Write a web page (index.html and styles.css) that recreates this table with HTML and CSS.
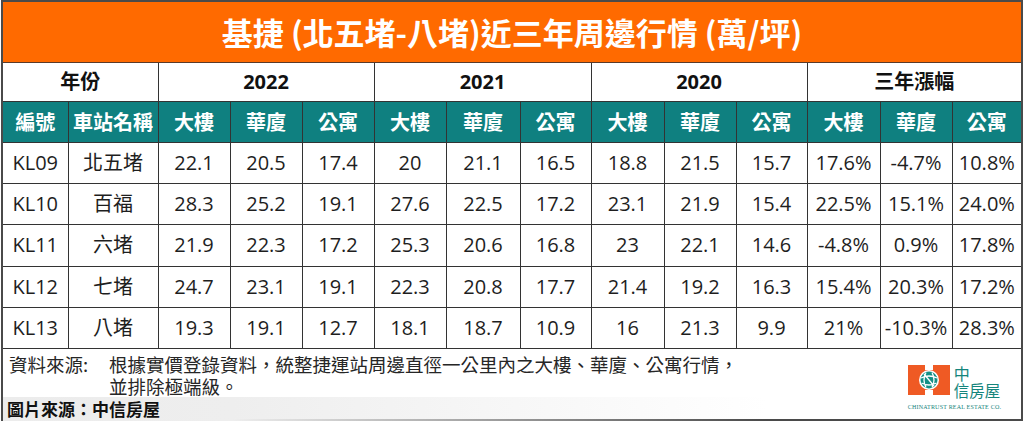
FILE: index.html
```html
<!DOCTYPE html>
<html lang="zh-Hant">
<head>
<meta charset="utf-8">
<link rel="stylesheet" href="styles.css">
</head>
<body>
<div class="sheet">
<table class="grid">
<colgroup>
<col style="width:66px"><col style="width:90px"><col style="width:72px"><col style="width:72px"><col style="width:72px"><col style="width:72px"><col style="width:74px"><col style="width:71px"><col style="width:73px"><col style="width:72px"><col style="width:71px"><col style="width:73px"><col style="width:72px"><col style="width:70px">
</colgroup>
<tr class="title-row"><td colspan="14" class="title">基捷 (北五堵-八堵)近三年周邊行情 (萬/坪)</td></tr>
<tr class="year-row">
<td colspan="2">年份</td><td colspan="3">2022</td><td colspan="3">2021</td><td colspan="3">2020</td><td colspan="3">三年漲幅</td>
</tr>
<tr class="head-row">
<td>編號</td><td>車站名稱</td><td>大樓</td><td>華廈</td><td>公寓</td><td>大樓</td><td>華廈</td><td>公寓</td><td>大樓</td><td>華廈</td><td>公寓</td><td>大樓</td><td>華廈</td><td>公寓</td>
</tr>
<tr class="data-row"><td>KL09</td><td>北五堵</td><td>22.1</td><td>20.5</td><td>17.4</td><td>20</td><td>21.1</td><td>16.5</td><td>18.8</td><td>21.5</td><td>15.7</td><td>17.6%</td><td>-4.7%</td><td>10.8%</td></tr>
<tr class="data-row"><td>KL10</td><td>百福</td><td>28.3</td><td>25.2</td><td>19.1</td><td>27.6</td><td>22.5</td><td>17.2</td><td>23.1</td><td>21.9</td><td>15.4</td><td>22.5%</td><td>15.1%</td><td>24.0%</td></tr>
<tr class="data-row"><td>KL11</td><td>六堵</td><td>21.9</td><td>22.3</td><td>17.2</td><td>25.3</td><td>20.6</td><td>16.8</td><td>23</td><td>22.1</td><td>14.6</td><td>-4.8%</td><td>0.9%</td><td>17.8%</td></tr>
<tr class="data-row"><td>KL12</td><td>七堵</td><td>24.7</td><td>23.1</td><td>19.1</td><td>22.3</td><td>20.8</td><td>17.7</td><td>21.4</td><td>19.2</td><td>16.3</td><td>15.4%</td><td>20.3%</td><td>17.2%</td></tr>
<tr class="data-row"><td>KL13</td><td>八堵</td><td>19.3</td><td>19.1</td><td>12.7</td><td>18.1</td><td>18.7</td><td>10.9</td><td>16</td><td>21.3</td><td>9.9</td><td>21%</td><td>-10.3%</td><td>28.3%</td></tr>
<tr class="foot-row">
<td colspan="14" class="foot">
<div class="foot-inner">
<div class="notes">
<div class="note"><span class="note-label">資料來源:</span><span class="note-body"><span class="line">根據實價登錄資料，統整捷運站周邊直徑一公里內之大樓、華廈、公寓行情，</span><span class="line">並排除極端級。</span></span></div>
<div class="caption">圖片來源：中信房屋</div>
</div>
<div class="logo">
<div class="logo-top">
<svg class="logo-mark" viewBox="0 0 42 30" width="42" height="30">
<rect x="0" y="0" width="42" height="30" fill="#ef5a24"/>
<rect x="17" y="0" width="8" height="5" fill="#fff"/>
<rect x="17" y="25" width="8" height="5" fill="#fff"/>
<circle cx="21" cy="15" r="10" fill="#fff"/>
<circle cx="21" cy="15" r="8.5" fill="#138f84"/>
<path d="M13 13 Q21 9 29 13 M13.5 18 Q21 22 28.5 18 M18 7.5 Q14 15 18 22.5 M24 7.5 Q28 15 24 22.5 M16 9 L26 21" stroke="#fff" stroke-width="1.3" fill="none"/>
</svg>
<div class="logo-name"><span class="zhong">中</span><span class="xin">信房屋</span></div>
</div>
<div class="logo-en">CHINATRUST REAL ESTATE CO.</div>
</div>
</div>
</td>
</tr>
</table>
</div>
</body>
</html>
```
FILE: styles.css
```css
html, body {
  margin: 0;
  padding: 0;
  background: #ffffff;
}
body {
  width: 1024px;
  height: 424px;
  overflow: hidden;
  font-family: "Open Sans", "Noto Sans CJK TC", sans-serif;
  color: #1e1e1e;
}
.sheet {
  padding: 0 1px 0 1px;
}
.grid {
  border-collapse: collapse;
  table-layout: fixed;
  width: 1021px;
  border: 2px solid #4a4a4a;
}
.grid td {
  border: 1px solid #333;
  text-align: center;
  padding: 0;
  font-size: 20px;
  line-height: 24px;
  white-space: nowrap;
  overflow: visible;
}
.title-row td {
  height: 60px;
  background: #ff6a00;
  color: #ffffff;
  font-weight: 700;
  font-size: 31px;
  font-family: "Noto Sans CJK TC", sans-serif;
  border-bottom: 1px solid #5a3a2a;
}
.year-row td {
  height: 38px;
  font-weight: 700;
  font-size: 20px;
  font-family: "Open Sans", "Noto Sans CJK TC", sans-serif;
  color: #111;
  background: #fff;
}
.head-row td {
  height: 40px;
  background: #0f8080;
  color: #ffffff;
  font-weight: 700;
  font-family: "Noto Sans CJK TC", sans-serif;
  font-size: 20px;
}
.data-row td {
  height: 40.2px;
  font-size: 20px;
  color: #1e1e1e;
}
.foot-row td.foot {
  height: 70px;
  text-align: left;
  vertical-align: top;
  padding: 0;
}
.foot-inner {
  display: flex;
  justify-content: space-between;
  height: 70px;
}
.notes {
  display: flex;
  flex-direction: column;
  justify-content: space-between;
  padding-top: 4px;
}
.note {
  display: flex;
  font-family: "Noto Sans CJK TC", sans-serif;
  font-size: 18.5px;
  color: #262626;
  padding-left: 6px;
}
.note-label {
  width: 100px;
  flex: none;
  line-height: 22px;
}
.note-body {
  display: flex;
  flex-direction: column;
  white-space: nowrap;
}
.note-body .line {
  display: block;
  line-height: 22px;
}
.caption {
  font-family: "Noto Sans CJK TC", sans-serif;
  font-weight: 700;
  font-size: 17px;
  line-height: 24px;
  color: #111;
  padding-left: 4px;
  width: 760px;
  background: linear-gradient(90deg, #ececec 0%, #eeeeee 30%, rgba(255,255,255,0) 100%);
}
.logo {
  display: flex;
  flex-direction: column;
  align-items: flex-start;
  padding: 16px 20px 0 0;
}
.logo-top {
  display: flex;
  align-items: flex-start;
  gap: 4px;
}
.logo-mark {
  display: block;
}
.logo-name {
  display: flex;
  flex-direction: column;
  font-family: "Noto Sans CJK TC", sans-serif;
  color: #15857c;
}
.zhong {
  display: block;
  font-size: 16px;
  line-height: 17px;
}
.xin {
  display: block;
  font-size: 15.5px;
  line-height: 17px;
}
.logo-en {
  font-family: "Liberation Serif", serif;
  font-size: 6px;
  line-height: 8px;
  color: #15857c;
  letter-spacing: 0.2px;
  margin-top: 4px;
  white-space: nowrap;
}
```
